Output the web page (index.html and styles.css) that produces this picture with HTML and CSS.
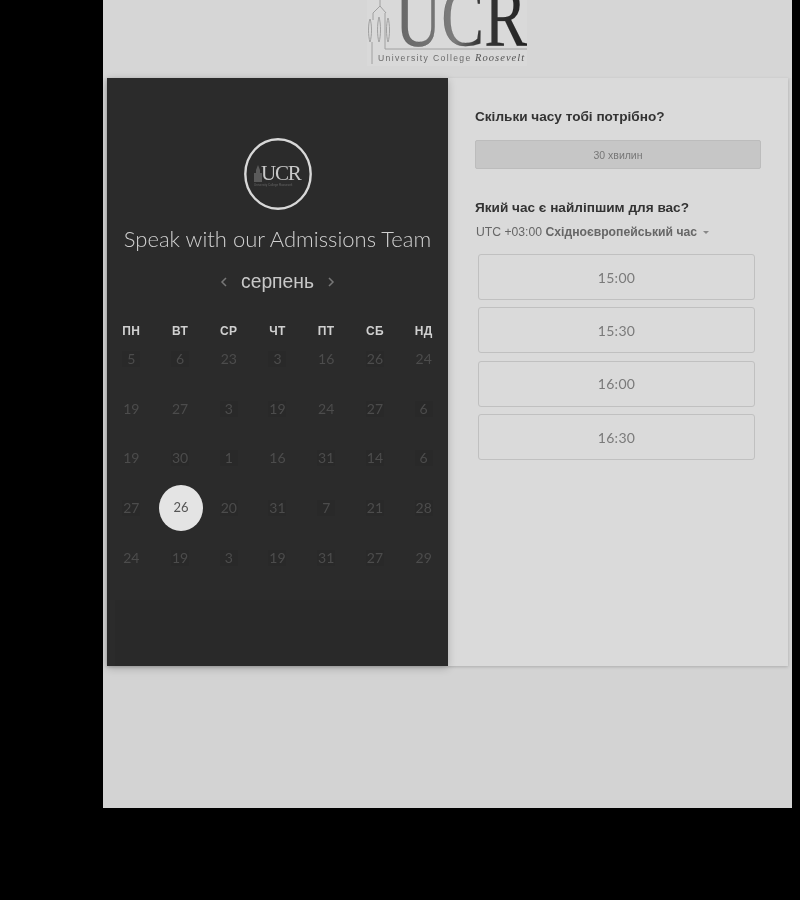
FILE: index.html
```html
<!DOCTYPE html>
<html lang="uk">
<head>
<meta charset="utf-8">
<title>Speak with our Admissions Team</title>
<link rel="stylesheet" href="styles.css">
</head>
<body>
<main class="page">
  <header class="brand">
    <svg class="brand-logo" width="160" height="66" viewBox="0 0 160 66">
      <defs>
        <linearGradient id="ucrFill" x1="0" x2="1" y1="0" y2="0">
          <stop offset="0" stop-color="#666"/>
          <stop offset="0.45" stop-color="#7c7c7c"/>
          <stop offset="0.62" stop-color="#3a3a3a"/>
          <stop offset="1" stop-color="#222"/>
        </linearGradient>
      </defs>
      <rect width="160" height="66" fill="#d9d9d9"/>
      <g fill="none" stroke="#a0a0a0" stroke-width="1">
        <path d="M13 -2V6L6 13V20M13 6L19 13"/>
        <path d="M3 19C1 24 1 36 3 42C5 36 5 24 3 19ZM12 17C10 24 10 36 12 42C14 36 14 24 12 17ZM21 18C19 24 19 36 21 42C23 36 23 24 21 18Z"/>
        <path d="M5 42V64"/>
        <path d="M18 13V49H160"/>
      </g>
      <text class="brand-ucr" x="28" y="46" textLength="132" lengthAdjust="spacingAndGlyphs" fill="url(#ucrFill)">UCR</text>
      <text class="brand-line" x="11" y="61">University College</text>
      <text class="brand-script" x="108" y="61">Roosevelt</text>
    </svg>
  </header>

  <section class="card">
    <div class="side">
      <div class="avatar">
        <svg width="68" height="72" viewBox="0 0 68 72">
          <ellipse cx="34" cy="36" rx="32.7" ry="34.7" fill="none" stroke="#d8d8d8" stroke-width="2.4"/>
          <path d="M12 44V32L14 27L16 32V44ZM10 44V35H18V44Z" fill="#5a5a5a"/>
          <text class="mini-ucr" x="17" y="42">UCR</text>
          <text class="mini-line" x="10" y="48">University College Roosevelt</text>
        </svg>
      </div>
      <h1 class="title">Speak with our Admissions Team</h1>
      <div class="month">
        <svg class="chev" width="8" height="12" viewBox="0 0 8 12"><path d="M6 2L2 6L6 10"/></svg>
        <span class="month-name">серпень</span>
        <svg class="chev" width="8" height="12" viewBox="0 0 8 12"><path d="M2 2L6 6L2 10"/></svg>
      </div>
      <div class="weekdays">
        <span>ПН</span><span>ВТ</span><span>СР</span><span>ЧТ</span><span>ПТ</span><span>СБ</span><span>НД</span>
      </div>
      <div class="days">
        <span class="day"><b class="patch">5</b></span><span class="day"><b class="patch">6</b></span><span class="day"><b>23</b></span><span class="day"><b class="patch">3</b></span><span class="day"><b>16</b></span><span class="day"><b class="patch">26</b></span><span class="day"><b>24</b></span>
        <span class="day"><b>19</b></span><span class="day"><b>27</b></span><span class="day"><b class="patch">3</b></span><span class="day"><b class="patch">19</b></span><span class="day"><b>24</b></span><span class="day"><b class="patch">27</b></span><span class="day"><b class="patch">6</b></span>
        <span class="day"><b>19</b></span><span class="day"><b class="patch">30</b></span><span class="day"><b class="patch">1</b></span><span class="day"><b>16</b></span><span class="day"><b class="patch">31</b></span><span class="day"><b class="patch">14</b></span><span class="day"><b class="patch">6</b></span>
        <span class="day"><b class="patch">27</b></span><span class="day"><b class="selected">26</b></span><span class="day"><b class="patch">20</b></span><span class="day"><b class="patch">31</b></span><span class="day"><b class="patch">7</b></span><span class="day"><b class="patch">21</b></span><span class="day"><b class="patch">28</b></span>
        <span class="day"><b>24</b></span><span class="day"><b class="patch">19</b></span><span class="day"><b class="patch">3</b></span><span class="day"><b class="patch">19</b></span><span class="day"><b class="patch">31</b></span><span class="day"><b class="patch">27</b></span><span class="day"><b>29</b></span>
      </div>
      <div class="side-foot"></div>
    </div>

    <div class="main">
      <h2 class="question">Скільки часу тобі потрібно?</h2>
      <button class="duration" type="button">30 хвилин</button>
      <h2 class="question question-second">Який час є найліпшим для вас?</h2>
      <div class="zone">UTC +03:00 <strong>Східноєвропейський час</strong><i class="caret"></i></div>
      <div class="slots">
        <button class="slot" type="button">15:00</button>
        <button class="slot" type="button">15:30</button>
        <button class="slot" type="button">16:00</button>
        <button class="slot" type="button">16:30</button>
      </div>
    </div>
  </section>
</main>
</body>
</html>
```

FILE: styles.css
```css
* { box-sizing: border-box; }

html, body { margin: 0; height: 900px; overflow: hidden; background: #000; }

body { font-family: "Liberation Sans", Arial, sans-serif; }

.page {
  width: 689px;
  height: 808px;
  margin-left: 103px;
  padding: 0 4px;
  background: #d3d3d3;
  filter: blur(0.45px);
}

.brand {
  height: 78px;
  display: flex;
  justify-content: center;
  background: #d6d6d6;
  margin: 0 -4px;
}

.brand-logo { display: block; margin-right: 1px; }

.brand-ucr {
  font-family: "Liberation Serif", serif;
  font-size: 84px;
  stroke: #333;
  stroke-width: 0.3px;
  stroke-opacity: 0.5;
}

.brand-line {
  font-family: "Liberation Sans", sans-serif;
  font-size: 8.6px;
  letter-spacing: 1.35px;
  fill: #6a6a6a;
}

.brand-script {
  font-family: "Liberation Serif", serif;
  font-style: italic;
  font-size: 10.5px;
  letter-spacing: 1.05px;
  fill: #555;
}

.card {
  display: flex;
  height: 588px;
  background: #dadada;
  box-shadow: 0 1px 3px rgba(0, 0, 0, 0.18);
}

.side {
  width: 341px;
  display: flex;
  flex-direction: column;
  padding-top: 60px;
  background: #2b2b2b;
  box-shadow: 0 2px 8px rgba(0, 0, 0, 0.22);
  position: relative;
}

.avatar { display: flex; justify-content: center; height: 72px; }
.avatar svg { display: block; }

.mini-ucr {
  font-family: "Liberation Serif", serif;
  font-size: 21px;
  letter-spacing: -1.2px;
  fill: #c9c9c9;
}

.mini-line {
  font-family: "Liberation Sans", sans-serif;
  font-size: 3px;
  fill: #666;
}

.title {
  margin: 14px 0 0;
  font-family: Lato, sans-serif;
  font-size: 22px;
  font-weight: 300;
  line-height: 30px;
  color: #d0d0d0;
  text-align: center;
  white-space: nowrap;
}

.month {
  margin-top: 13px;
  height: 30px;
  display: flex;
  align-items: center;
  justify-content: center;
  gap: 13px;
}

.month-name { font-size: 19.3px; color: #c8c8c8; }

.chev { display: block; }
.chev path { fill: none; stroke: #777; stroke-width: 1.5; }

.weekdays {
  margin-top: 20px;
  height: 28px;
  display: grid;
  grid-template-columns: repeat(7, 1fr);
  align-items: center;
  text-align: center;
  font-size: 12px;
  font-weight: 700;
  letter-spacing: 0.4px;
  color: #d0d0d0;
}

.days {
  display: grid;
  grid-template-columns: repeat(7, 1fr);
  grid-auto-rows: 28px;
  row-gap: 21.7px;
}

.day {
  display: flex;
  align-items: center;
  justify-content: center;
}

.day b {
  min-width: 18px;
  height: 16px;
  font-family: Lato, sans-serif;
  font-size: 14px;
  font-weight: 400;
  line-height: 16px;
  text-align: center;
  color: #4c4c4c;
}

.day .patch { background: #292929; }

.day .selected {
  width: 44px;
  height: 46px;
  flex: none;
  margin: -9px 0 -9px 2px;
  border-radius: 50%;
  font-size: 13px;
  line-height: 44px;
  background: #e4e4e4;
  color: #555;
}

.side-foot {
  margin: auto 0 0 8px;
  height: 66px;
  background: #292929;
}

.main {
  flex: 1;
  padding: 28px 27px 0;
}

.question {
  margin: 0;
  font-size: 13.6px;
  font-weight: 700;
  line-height: 22px;
  color: #333;
  white-space: nowrap;
}

.question-second { margin-top: 28px; }

.duration {
  display: block;
  width: 286px;
  height: 29px;
  margin-top: 12px;
  padding: 0;
  border: 1px solid #bcbcbc;
  border-radius: 2px;
  background: #c6c6c6;
  font-family: "Liberation Sans", sans-serif;
  font-size: 10.5px;
  color: #777;
}

.zone {
  margin: 3px 0 0 1px;
  height: 20px;
  font-size: 12.2px;
  line-height: 20px;
  color: #666;
  white-space: nowrap;
}

.zone strong { font-weight: 700; }

.caret {
  display: inline-block;
  margin-left: 6px;
  vertical-align: 2px;
  border: 3px solid transparent;
  border-top: 3px solid #888;
  border-bottom: 0;
}

.slots {
  display: flex;
  flex-direction: column;
  gap: 7.4px;
  width: 277px;
  margin: 12px 0 0 3px;
}

.slot {
  height: 46px;
  padding: 0;
  border: 1px solid #c0c0c0;
  border-radius: 3px;
  background: transparent;
  font-family: Lato, sans-serif;
  font-size: 14px;
  letter-spacing: 0.3px;
  color: #7a7a7a;
}
```
